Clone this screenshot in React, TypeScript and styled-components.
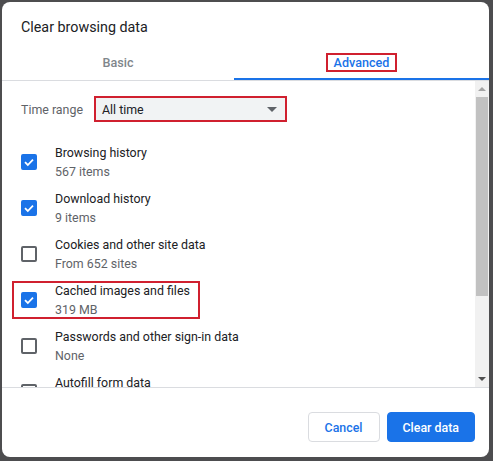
import styled, { createGlobalStyle } from "styled-components";

const GlobalStyle = createGlobalStyle`
  html, body {
    margin: 0;
    padding: 0;
    background: #4d4d4f;
  }
  body {
    font-family: Roboto, "Liberation Sans", Arial, sans-serif;
    -webkit-font-smoothing: antialiased;
  }
`;

const Page = styled.div`
  padding: 2px 4px 4px 2px;
`;

const Dialog = styled.div`
  width: 487px;
  height: 455px;
  background: #ffffff;
  border-radius: 8px;
  display: flex;
  flex-direction: column;
  overflow: hidden;
`;

const Title = styled.h2`
  margin: 15px 0 7px 19px;
  font-size: 14.3px;
  line-height: 20px;
  font-weight: 400;
  color: #202124;
`;

const TabBar = styled.div`
  display: flex;
  border-bottom: 1px solid #dadce0;
`;

const Tab = styled.div<{ $active?: boolean; $width?: number }>`
  ${({ $width }) => ($width ? `width: ${$width}px;` : "flex: 1;")}
  height: 36px;
  display: flex;
  align-items: center;
  justify-content: center;
  font-size: 12.6px;
  font-weight: 500;
  color: ${({ $active }) => ($active ? "#1a73e8" : "#80868b")};
  box-shadow: ${({ $active }) => ($active ? "inset 0 -2px 0 #1a73e8" : "none")};
`;

const Marked = styled.span`
  border: 2px solid #d0202f;
  padding: 0 6px;
  line-height: 15px;
`;

const Body = styled.div`
  height: 306px;
  display: flex;
`;

const Content = styled.div`
  flex: 1;
  overflow: hidden;
  padding-top: 15px;
`;

const RangeRow = styled.div`
  display: flex;
  align-items: center;
  gap: 11px;
  padding-left: 19px;
  margin-bottom: 21px;
`;

const RangeLabel = styled.span`
  font-size: 12.4px;
  color: #5f6368;
  white-space: nowrap;
`;

const Select = styled.div`
  width: 193px;
  height: 26px;
  box-sizing: border-box;
  border: 2px solid #d0202f;
  background: #f1f3f4;
  display: flex;
  align-items: center;
  justify-content: space-between;
  padding: 0 8px 0 6px;
  font-size: 12.4px;
  color: #202124;
`;

const Caret = styled.span`
  width: 0;
  height: 0;
  border-left: 5px solid transparent;
  border-right: 5px solid transparent;
  border-top: 5px solid #5f6368;
`;

const Row = styled.div<{ $marked?: boolean }>`
  display: flex;
  align-items: center;
  width: fit-content;
  height: 38px;
  box-sizing: border-box;
  margin: 0 0 8px 10px;
  padding: 0 8px 0 7px;
  border: 2px solid ${({ $marked }) => ($marked ? "#d0202f" : "transparent")};
  gap: 18px;
`;

const Box = styled.span<{ $checked?: boolean }>`
  width: 16px;
  height: 16px;
  box-sizing: border-box;
  border-radius: 2px;
  flex-shrink: 0;
  display: flex;
  align-items: center;
  justify-content: center;
  background: ${({ $checked }) => ($checked ? "#1a73e8" : "#ffffff")};
  border: 2px solid ${({ $checked }) => ($checked ? "#1a73e8" : "#5f6368")};
`;

const Texts = styled.div`
  display: flex;
  flex-direction: column;
  font-size: 12.4px;
  line-height: 17px;
`;

const ItemTitle = styled.span`
  color: #202124;
  white-space: nowrap;
`;

const ItemSub = styled.span`
  color: #5f6368;
  padding-top: 2px;
`;

const Scrollbar = styled.div`
  width: 14px;
  background: #f1f1f1;
  display: flex;
  flex-direction: column;
  align-items: center;
`;

const Arrow = styled.span<{ $down?: boolean }>`
  margin: 6px 0;
  width: 0;
  height: 0;
  border-left: 4px solid transparent;
  border-right: 4px solid transparent;
  ${({ $down }) =>
    $down
      ? "border-top: 4px solid #505050;"
      : "border-bottom: 4px solid #a3a3a3;"}
`;

const Thumb = styled.div`
  width: 12px;
  height: 199px;
  background: #c1c1c1;
  margin-bottom: auto;
`;

const Footer = styled.div`
  flex: 1;
  border-top: 1px solid #dadce0;
  display: flex;
  justify-content: flex-end;
  align-items: flex-start;
  gap: 7px;
  padding: 24px 14px 0 0;
`;

const Button = styled.button<{ $primary?: boolean }>`
  height: 30px;
  box-sizing: border-box;
  padding: 0 ${({ $primary }) => ($primary ? "15px" : "16px")};
  border-radius: 4px;
  font-family: inherit;
  font-size: 12.4px;
  font-weight: 500;
  cursor: pointer;
  color: ${({ $primary }) => ($primary ? "#ffffff" : "#1a73e8")};
  background: ${({ $primary }) => ($primary ? "#1a73e8" : "#ffffff")};
  border: 1px solid ${({ $primary }) => ($primary ? "#1a73e8" : "#dadce0")};
`;

const Check = () => (
  <svg width="12" height="12" viewBox="0 0 12 12">
    <path d="M2 6.2 L4.8 9 L10 3.6" fill="none" stroke="#fff" strokeWidth="1.8" />
  </svg>
);

const items = [
  { title: "Browsing history", sub: "567 items", checked: true },
  { title: "Download history", sub: "9 items", checked: true },
  { title: "Cookies and other site data", sub: "From 652 sites", checked: false },
  { title: "Cached images and files", sub: "319 MB", checked: true, marked: true },
  { title: "Passwords and other sign-in data", sub: "None", checked: false },
  { title: "Autofill form data", sub: "None", checked: false },
];

export default function App() {
  return (
    <>
      <GlobalStyle />
      <Page>
        <Dialog>
          <Title>Clear browsing data</Title>
          <TabBar>
            <Tab $width={232}>Basic</Tab>
            <Tab $active>
              <Marked>Advanced</Marked>
            </Tab>
          </TabBar>
          <Body>
            <Content>
              <RangeRow>
                <RangeLabel>Time range</RangeLabel>
                <Select>
                  All time
                  <Caret />
                </Select>
              </RangeRow>
              {items.map((item) => (
                <Row key={item.title} $marked={item.marked}>
                  <Box $checked={item.checked}>{item.checked && <Check />}</Box>
                  <Texts>
                    <ItemTitle>{item.title}</ItemTitle>
                    <ItemSub>{item.sub}</ItemSub>
                  </Texts>
                </Row>
              ))}
            </Content>
            <Scrollbar>
              <Arrow />
              <Thumb />
              <Arrow $down />
            </Scrollbar>
          </Body>
          <Footer>
            <Button>Cancel</Button>
            <Button $primary>Clear data</Button>
          </Footer>
        </Dialog>
      </Page>
    </>
  );
}
